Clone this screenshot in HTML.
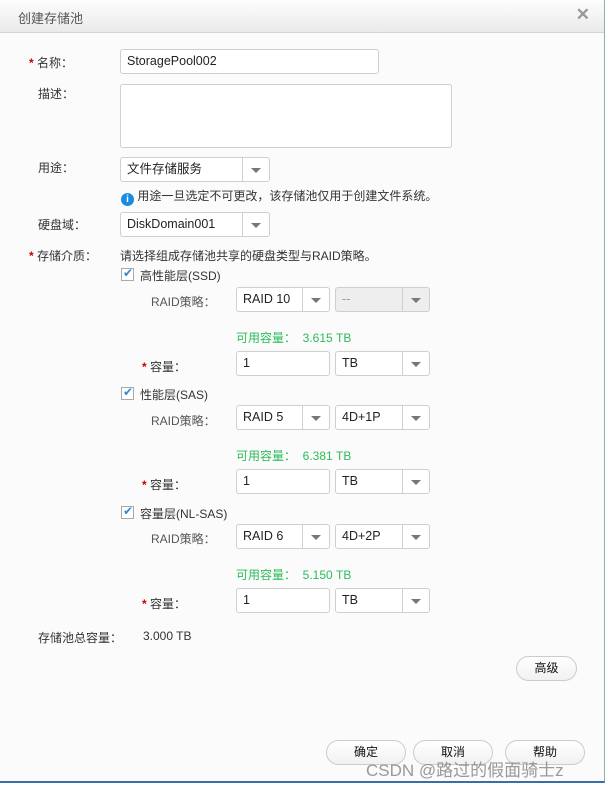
<!DOCTYPE html>
<html><head><meta charset="utf-8"><style>
*{box-sizing:border-box;margin:0;padding:0}
body{width:608px;height:785px;background:#fff;font-family:"Liberation Sans","Noto Sans CJK SC",sans-serif;font-size:12px;color:#333;position:relative;overflow:hidden}
.dlg{position:absolute;left:0;top:0;width:605px;height:783px;background:#fbfbfb;border-right:1px solid #9aa;border-bottom:2px solid #3a6ea5}
.title{position:absolute;left:0;top:0;width:604px;height:33px;background:linear-gradient(#fdfdfd,#eaeaea);border-bottom:1px solid #d4d4d4}
.title span{position:absolute;left:18px;top:8px;font-size:13px;color:#555}
.x{position:absolute;right:14px;top:5px;font-size:17px;color:#999;font-weight:bold}
.a{position:absolute;white-space:nowrap}
.star{color:#c00;font-weight:bold}
.in{position:absolute;background:#fff;border:1px solid #cfcfcf;border-radius:3px;padding:0 6px;line-height:23px;font-size:12.5px;color:#222}
.sel{position:absolute;background:#fff;border:1px solid #cfcfcf;border-radius:3px;padding:0 6px;line-height:23px;font-size:12.5px;color:#222}
.sel:after{content:"";position:absolute;right:0;top:0;width:26px;height:23px;border-left:1px solid #cfcfcf;background:linear-gradient(#888,#888) no-repeat}
.sel i{position:absolute;right:8px;top:10px;width:0;height:0;border-left:5px solid transparent;border-right:5px solid transparent;border-top:5px solid #777;z-index:2}
.sel.dis{background:#eee}
.sel:after{background:none}
.cb{position:absolute;width:13px;height:13px;border:1px solid #aaa;background:#fff}
.cb:after{content:"✔";position:absolute;left:1px;top:-3px;color:#2a8ad8;font-size:12px}
.g{color:#2dbb5b}
.btn{position:absolute;height:25px;border:1px solid #ccc;border-radius:13px;background:linear-gradient(#fff,#f1f1f1);text-align:center;line-height:23px;color:#111}
.wm{position:absolute;left:366px;top:756px;font-size:17px;color:rgba(120,120,120,.75);white-space:nowrap}
</style></head><body><div class="dlg">
<div class="title"><span>创建存储池</span><div class="x">✕</div></div>
<div class="a" style="left:29px;top:54px"><span class="star">*</span> 名称：</div>
<div class="in" style="left:120px;top:49px;width:259px;height:25px">StoragePool002</div>
<div class="a" style="left:38px;top:85px">描述：</div>
<div class="in" style="left:120px;top:84px;width:332px;height:64px"></div>
<div class="a" style="left:38px;top:159px">用途：</div>
<div class="sel" style="left:120px;top:157px;width:150px;height:25px">文件存储服务<i></i></div>
<div class="a" style="left:121px;top:187px"><span style="display:inline-block;width:13px;height:13px;border-radius:50%;background:#1a8be0;color:#fff;font-size:10px;text-align:center;line-height:13px;font-weight:bold;vertical-align:-2px">i</span> 用途一旦选定不可更改，该存储池仅用于创建文件系统。</div>
<div class="a" style="left:38px;top:216px">硬盘域：</div>
<div class="sel" style="left:120px;top:212px;width:150px;height:25px">DiskDomain001<i></i></div>
<div class="a" style="left:29px;top:247px"><span class="star">*</span> 存储介质：</div>
<div class="a" style="left:120px;top:247px">请选择组成存储池共享的硬盘类型与RAID策略。</div>

<div class="cb" style="left:121px;top:268px"></div><div class="a" style="left:140px;top:267px">高性能层(SSD)</div>
<div class="a" style="left:151px;top:293px;color:#555">RAID策略：</div>
<div class="sel" style="left:236px;top:287px;width:94px;height:25px">RAID 10<i></i></div>
<div class="sel dis" style="left:335px;top:287px;width:95px;height:25px;color:#999">--<i></i></div>
<div class="a g" style="left:236px;top:329px">可用容量：&nbsp; 3.615 TB</div>
<div class="a" style="left:142px;top:358px"><span class="star">*</span> 容量：</div>
<div class="in" style="left:236px;top:351px;width:94px;height:25px">1</div>
<div class="sel" style="left:335px;top:351px;width:95px;height:25px">TB<i></i></div>

<div class="cb" style="left:121px;top:387px"></div><div class="a" style="left:140px;top:386px">性能层(SAS)</div>
<div class="a" style="left:151px;top:412px;color:#555">RAID策略：</div>
<div class="sel" style="left:236px;top:405px;width:94px;height:25px">RAID 5<i></i></div>
<div class="sel" style="left:335px;top:405px;width:95px;height:25px">4D+1P<i></i></div>
<div class="a g" style="left:236px;top:447px">可用容量：&nbsp; 6.381 TB</div>
<div class="a" style="left:142px;top:476px"><span class="star">*</span> 容量：</div>
<div class="in" style="left:236px;top:469px;width:94px;height:25px">1</div>
<div class="sel" style="left:335px;top:469px;width:95px;height:25px">TB<i></i></div>

<div class="cb" style="left:121px;top:506px"></div><div class="a" style="left:140px;top:505px">容量层(NL-SAS)</div>
<div class="a" style="left:151px;top:530px;color:#555">RAID策略：</div>
<div class="sel" style="left:236px;top:524px;width:94px;height:25px">RAID 6<i></i></div>
<div class="sel" style="left:335px;top:524px;width:95px;height:25px">4D+2P<i></i></div>
<div class="a g" style="left:236px;top:566px">可用容量：&nbsp; 5.150 TB</div>
<div class="a" style="left:142px;top:595px"><span class="star">*</span> 容量：</div>
<div class="in" style="left:236px;top:588px;width:94px;height:25px">1</div>
<div class="sel" style="left:335px;top:588px;width:95px;height:25px">TB<i></i></div>

<div class="a" style="left:38px;top:629px">存储池总容量：</div>
<div class="a" style="left:143px;top:629px">3.000 TB</div>
<div class="btn" style="left:516px;top:656px;width:61px">高级</div>
<div class="btn" style="left:326px;top:740px;width:80px">确定</div>
<div class="btn" style="left:413px;top:740px;width:80px">取消</div>
<div class="btn" style="left:505px;top:740px;width:80px">帮助</div>
<div class="wm">CSDN @路过的假面骑士z</div>
</div></body></html>
